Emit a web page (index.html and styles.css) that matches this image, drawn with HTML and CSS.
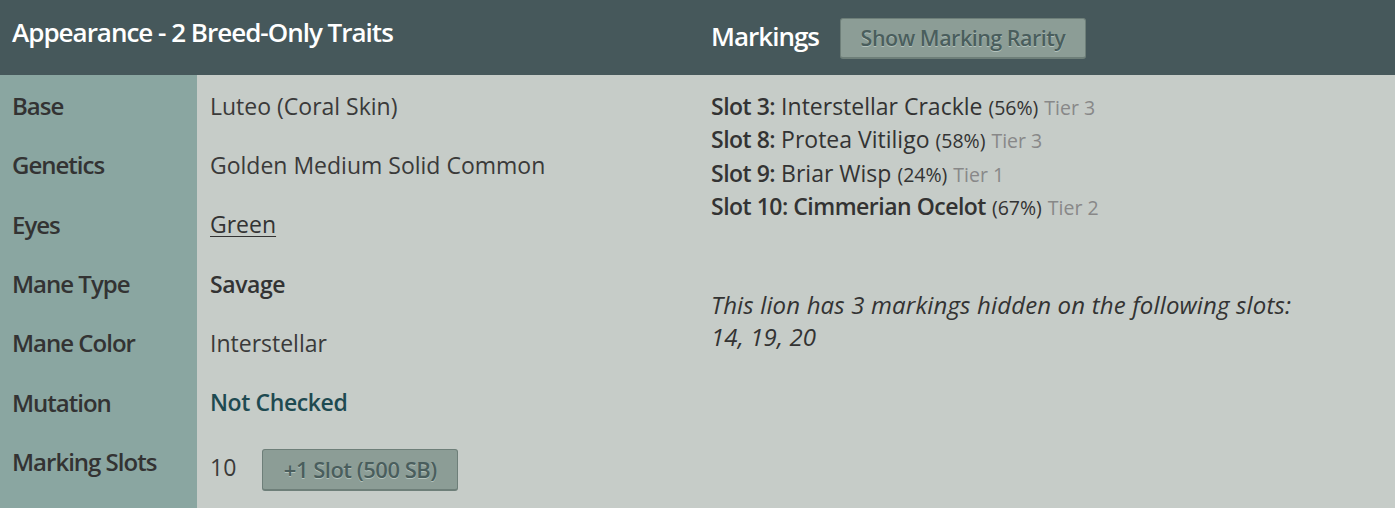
FILE: index.html
```html
<!DOCTYPE html>
<html>
<head>
<meta charset="utf-8">
<link rel="stylesheet" href="styles.css">
</head>
<body>
<div class="panel">
  <div class="col left">
    <div class="head"><h2>Appearance - 2 Breed-Only Traits</h2></div>
    <div class="table">
      <div class="label">Base</div><div class="value">Luteo (Coral Skin)</div>
      <div class="label">Genetics</div><div class="value">Golden Medium Solid Common</div>
      <div class="label">Eyes</div><div class="value"><a class="link">Green</a></div>
      <div class="label">Mane Type</div><div class="value strong">Savage</div>
      <div class="label">Mane Color</div><div class="value">Interstellar</div>
      <div class="label">Mutation</div><div class="value strong teal">Not Checked</div>
      <div class="label">Marking Slots</div><div class="value slots"><span>10</span><button class="btn small">+1 Slot (500 SB)</button></div>
      <div class="label filler"></div><div class="value filler"></div>
    </div>
  </div>
  <div class="col right">
    <div class="head"><h2>Markings</h2><button class="btn">Show Marking Rarity</button></div>
    <div class="markings">
      <ul class="list">
        <li><b>Slot 3:</b> Interstellar Crackle <span class="pct">(56%)</span> <span class="tier">Tier 3</span></li>
        <li><b>Slot 8:</b> Protea Vitiligo <span class="pct">(58%)</span> <span class="tier">Tier 3</span></li>
        <li><b>Slot 9:</b> Briar Wisp <span class="pct">(24%)</span> <span class="tier">Tier 1</span></li>
        <li><b>Slot 10: Cimmerian Ocelot</b> <span class="pct">(67%)</span> <span class="tier">Tier 2</span></li>
      </ul>
      <p class="hidden">This lion has 3 markings hidden on the following slots:<br>14, 19, 20</p>
    </div>
  </div>
</div>
</body>
</html>
```

FILE: styles.css
```css
html, body {
  margin: 0;
  padding: 0;
  height: 100%;
  overflow: hidden;
  background: #c6ccc8;
  font-family: "Open Sans", "Noto Sans", sans-serif;
  color: #333;
}
.panel {
  display: grid;
  grid-template-columns: 698px 1fr;
  height: 508px;
}
.col {
  display: flex;
  flex-direction: column;
}
.head {
  background: #46585b;
  height: 75px;
  flex: none;
  display: flex;
  align-items: center;
  gap: 21px;
  padding: 0 13px;
  box-sizing: border-box;
}
.left .head { padding-left: 12px; }
.head h2 {
  margin: 0;
  color: #fff;
  font-size: 26px;
  font-weight: 600;
  letter-spacing: -1px;
}
.left .head h2 { margin-bottom: 11px; }
.right .head h2 { margin-bottom: 4px; }
.btn {
  font-family: "Open Sans", "Noto Sans", sans-serif;
  font-weight: 600;
  font-size: 21.5px;
  letter-spacing: -0.5px;
  color: #4a5e5d;
  text-shadow: 0 1px 0 #b3c2bc;
  background: #8c9d96;
  border: 1px solid #6e7f79;
  border-bottom-width: 2px;
  border-radius: 3px;
  height: 41px;
  padding: 0;
  cursor: pointer;
}
.right .head .btn { width: 246px; margin-top: 1px; }
.table {
  flex: 1;
  display: grid;
  grid-template-columns: 197px 1fr;
  grid-template-rows: repeat(7, 59.3px) 1fr;
  padding-top: 1px;
  background: linear-gradient(to right, #8aa6a1 197px, transparent 197px);
}
.label, .value {
  display: flex;
  align-items: center;
  font-size: 23px;
}
.label {
  padding-left: 12px;
  font-size: 24px;
  font-weight: 600;
  letter-spacing: -1px;
  color: #333;
}
.value {
  padding-left: 13px;
  color: #3a3a3a;
}
.link {
  text-decoration: underline;
  text-decoration-thickness: 1px;
  text-underline-offset: 3px;
  color: #333;
}
.strong { font-weight: 600; letter-spacing: -0.4px; color: #333; }
.teal { color: #1e4a51; }
.slots { gap: 26px; padding-top: 11px; }
.btn.small {
  width: 196px;
  font-size: 22px;
  height: 42px;
  margin-top: 6px;
}
.markings {
  padding: 15px 13px 0;
}
.list {
  list-style: none;
  margin: 0;
  padding: 0;
}
.list li {
  font-size: 23px;
  line-height: 33.3px;
  height: 33.3px;
  color: #333;
}
.list b { font-weight: 600; letter-spacing: -0.5px; }
.pct, .tier { font-size: 19.5px; line-height: 1; }
.pct { color: #333; }
.tier { color: #888; }
.hidden {
  margin: 66px 0 0;
  font-style: italic;
  font-size: 24px;
  line-height: 32px;
  color: #333;
  letter-spacing: 0.15px;
}
```
